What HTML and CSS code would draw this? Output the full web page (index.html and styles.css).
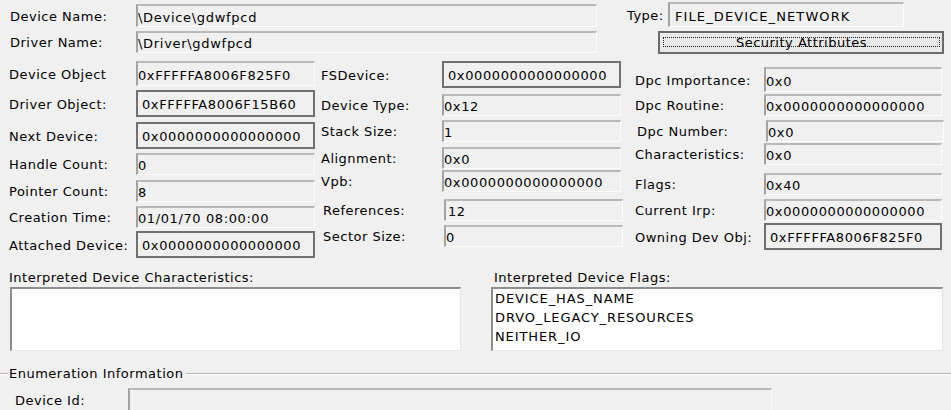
FILE: index.html
```html
<!DOCTYPE html>
<html>
<head>
<meta charset="utf-8">
<link rel="stylesheet" href="styles.css">
</head>
<body>
<div class="dlg">
  <div class="top">
    <div class="top-left">
      <div class="row r-name"><span class="lbl lbl-top">Device Name:</span><div class="box ro wide">\Device\gdwfpcd</div></div>
      <div class="row r-driver"><span class="lbl lbl-top">Driver Name:</span><div class="box ro wide">\Driver\gdwfpcd</div></div>
    </div>
    <div class="top-right">
      <div class="row r-type"><span class="lbl lbl-type">Type:</span><div class="box ro type">FILE_DEVICE_NETWORK</div></div>
      <div class="btn"><span class="focus">Security Attributes</span></div>
    </div>
  </div>

  <div class="mid">
    <div class="col col-a">
      <div class="row"><span class="lbl">Device Object</span><div class="box ro tall">0xFFFFFA8006F825F0</div></div>
      <div class="row"><span class="lbl">Driver Object:</span><div class="box dark">0xFFFFFA8006F15B60</div></div>
      <div class="row"><span class="lbl">Next Device:</span><div class="box dark">0x0000000000000000</div></div>
      <div class="row"><span class="lbl">Handle Count:</span><div class="box ro">0</div></div>
      <div class="row"><span class="lbl">Pointer Count:</span><div class="box ro">8</div></div>
      <div class="row"><span class="lbl">Creation Time:</span><div class="box ro">01/01/70 08:00:00</div></div>
      <div class="row"><span class="lbl">Attached Device:</span><div class="box dark">0x0000000000000000</div></div>
    </div>
    <div class="col col-b">
      <div class="row"><span class="lbl">FSDevice:</span><div class="box dark">0x0000000000000000</div></div>
      <div class="row"><span class="lbl">Device Type:</span><div class="box ro">0x12</div></div>
      <div class="row"><span class="lbl">Stack Size:</span><div class="box ro">1</div></div>
      <div class="row"><span class="lbl">Alignment:</span><div class="box ro">0x0</div></div>
      <div class="row"><span class="lbl">Vpb:</span><div class="box ro">0x0000000000000000</div></div>
      <div class="row shift"><span class="lbl">References:</span><div class="box ro pad">12</div></div>
      <div class="row shift"><span class="lbl">Sector Size:</span><div class="box ro">0</div></div>
    </div>
    <div class="col col-c">
      <div class="row"><span class="lbl">Dpc Importance:</span><div class="box ro tall">0x0</div></div>
      <div class="row"><span class="lbl">Dpc Routine:</span><div class="box ro">0x0000000000000000</div></div>
      <div class="row shift"><span class="lbl">Dpc Number:</span><div class="box ro">0x0</div></div>
      <div class="row"><span class="lbl">Characteristics:</span><div class="box ro">0x0</div></div>
      <div class="row"><span class="lbl">Flags:</span><div class="box ro">0x40</div></div>
      <div class="row"><span class="lbl">Current Irp:</span><div class="box ro">0x0000000000000000</div></div>
      <div class="row"><span class="lbl">Owning Dev Obj:</span><div class="box dark">0xFFFFFA8006F825F0</div></div>
    </div>
  </div>

  <div class="lists">
    <div class="list-block lb-left">
      <div class="list-lbl">Interpreted Device Characteristics:</div>
      <div class="listbox"></div>
    </div>
    <div class="list-block lb-right">
      <div class="list-lbl">Interpreted Device Flags:</div>
      <div class="listbox">
        <div class="item">DEVICE_HAS_NAME</div>
        <div class="item">DRVO_LEGACY_RESOURCES</div>
        <div class="item">NEITHER_IO</div>
      </div>
    </div>
  </div>

  <div class="group">
    <div class="group-head"><span class="group-title">Enumeration Information</span></div>
    <div class="row r-devid"><span class="lbl lbl-devid">Device Id:</span><div class="box ro devid"></div></div>
  </div>
</div>
</body>
</html>
```

FILE: styles.css
```css
html, body {
  margin: 0;
  padding: 0;
  background: #f0f0f0;
}
body {
  width: 951px;
  height: 410px;
  overflow: hidden;
  font-family: "DejaVu Sans", sans-serif;
  font-size: 13px;
  line-height: 15px;
  color: #000;
  letter-spacing: 0.5px;
}
.dlg {
  width: 951px;
  height: 410px;
  overflow: hidden;
}

/* generic row */
.row {
  display: flex;
  align-items: center;
  align-self: start;
}
.lbl {
  flex: none;
  white-space: nowrap;
  padding-top: 1px;
}

/* boxes */
.box {
  box-sizing: border-box;
  display: flex;
  align-items: center;
  height: 22px;
  white-space: nowrap;
  overflow: hidden;
  padding-top: 2px;
  letter-spacing: 0.6px;
}
.ro {
  background: #f0f0f0;
  border-style: solid;
  border-width: 2px 1px 1px 2px;
  border-color: #b9b9b9 #fdfdfd #fdfdfd #a3a3a3;
  padding-left: 0;
}
.tall { height: 25px; }
.pad { padding-left: 2px; }
.dark {
  height: 27px;
  background: #f0f0f0;
  border: 2px solid #717171;
  padding-left: 4px;
}

/* top */
.top {
  display: flex;
  height: 57px;
  padding-left: 10px;
}
.top-left {
  width: 587px;
  flex: none;
}
.lbl-top { width: 126px; }
.wide { width: 461px; letter-spacing: 0.7px; }
.r-name { margin-top: 4px; }
.r-name .box { height: 23px; }
.r-driver { margin-top: 4px; }
.top-right {
  margin-left: 30px;
  display: flex;
  flex-direction: column;
}
.r-type { margin-top: 2px; }
.lbl-type { width: 41px; }
.type {
  width: 236px;
  height: 25px;
  padding-left: 5px;
  letter-spacing: 1.1px;
}
.btn {
  box-sizing: border-box;
  margin-left: 31px;
  margin-top: 4px;
  width: 286px;
  height: 23px;
  border: 2px solid #6b6b6b;
  background: #e9e9e9;
  padding: 4px 2px 0 3px;
  display: flex;
  align-items: flex-start;
}
.focus {
  flex: 1;
  height: 8px;
  border: 1px dotted #222;
  text-align: center;
  line-height: 10px;
  overflow: visible;
  white-space: nowrap;
}

/* middle columns */
.mid {
  display: flex;
  height: 200px;
}
.col {
  display: grid;
  flex: none;
}
.col-a {
  padding-left: 9px;
  padding-top: 4px;
  grid-template-rows: 29px 32px 31px 27px 26px 25px 25px;
}
.col-a .lbl { width: 127px; }
.col-a .box { width: 179px; }
.col-b {
  margin-left: 6px;
  padding-top: 4px;
  grid-template-rows: 33px 26px 27px 23px 29px 26px 22px;
}
.col-b .lbl { width: 121px; }
.col-b .box { width: 179px; }
.col-c {
  margin-left: 12px;
  padding-top: 10px;
  grid-template-rows: 27px 26px 23px 30px 26px 24px 27px;
}
.col-c .lbl { width: 129px; }
.col-c .box { width: 178px; }
.shift { margin-left: 2px; }

/* list boxes */
.lists {
  display: flex;
  margin-top: 13px;
}
.list-block { flex: none; }
.lb-left {
  margin-left: 9px;
  width: 452px;
}
.lb-right {
  margin-left: 30px;
  width: 452px;
}
.list-lbl {
  height: 15px;
  white-space: nowrap;
}
.lb-right .list-lbl { padding-left: 3px; }
.lb-left .listbox { margin-left: 1px; width: 451px; }
.listbox {
  box-sizing: border-box;
  margin-top: 2px;
  height: 64px;
  background: #fff;
  border-style: solid;
  border-width: 2px 1px 1px 2px;
  border-color: #8e8e8e #e6e6e6 #e6e6e6 #8e8e8e;
  padding: 0 2px;
}
.item {
  line-height: 19px;
  height: 19px;
  white-space: nowrap;
  letter-spacing: 0.9px;
}

/* group */
.group {
  margin-top: 15px;
}
.group-head {
  display: flex;
  align-items: center;
  height: 15px;
}
.group-head::before,
.group-head::after {
  content: "";
  height: 1px;
  background: #b5b5b5;
  border-bottom: 1px solid #ffffff;
}
.group-head::before {
  width: 8px;
  flex: none;
}
.group-head::after {
  flex: 1;
  margin-left: 3px;
}
.group-title {
  margin-left: 1px;
  white-space: nowrap;
}
.r-devid {
  margin-top: 7px;
  padding-left: 15px;
}
.lbl-devid { width: 113px; }
.devid {
  width: 644px;
  height: 24px;
}
```
